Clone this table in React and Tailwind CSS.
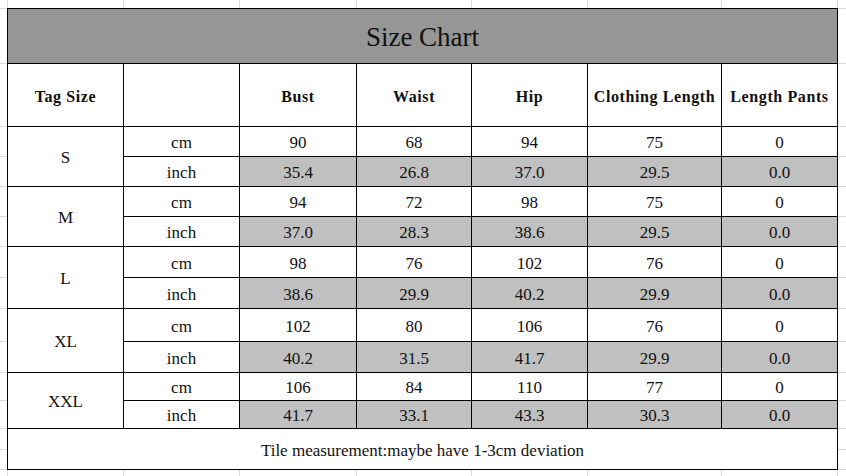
import React from "react";

// faint spreadsheet gridlines around the table
const stripRows = [
  "h-[54px]", "h-[62px]", "h-[29px]", "h-[29px]", "h-[29px]", "h-[29px]", "h-[30px]",
  "h-[30px]", "h-[32px]", "h-[30px]", "h-[27px]", "h-[27px]", "h-[20px]", "h-[19px]",
];
const stripCols = [
  "w-[115px]", "w-[115px]", "w-[116px]", "w-[114px]", "w-[115px]", "w-[133px]", "w-[115px]",
];

const sizes = [
  { tag: "S", cm: ["90", "68", "94", "75", "0"], inch: ["35.4", "26.8", "37.0", "29.5", "0.0"] },
  { tag: "M", cm: ["94", "72", "98", "75", "0"], inch: ["37.0", "28.3", "38.6", "29.5", "0.0"] },
  { tag: "L", cm: ["98", "76", "102", "76", "0"], inch: ["38.6", "29.9", "40.2", "29.9", "0.0"] },
  { tag: "XL", cm: ["102", "80", "106", "76", "0"], inch: ["40.2", "31.5", "41.7", "29.9", "0.0"] },
  { tag: "XXL", cm: ["106", "84", "110", "77", "0"], inch: ["41.7", "33.1", "43.3", "30.3", "0.0"] },
];

const headers = ["Tag Size", "", "Bust", "Waist", "Hip", "Clothing Length", "Length Pants"];

function Cell({ children, className = "" }) {
  return (
    <div className={"flex items-center justify-center text-center pt-[3px] " + className}>
      {children}
    </div>
  );
}

function SideStrip() {
  return (
    <div className="flex flex-col">
      {stripRows.map((h, i) => (
        <div key={i} className={"border-t border-[#d9d9d9] box-content " + h} />
      ))}
      <div className="border-t border-[#d9d9d9]" />
    </div>
  );
}

function EdgeStrip() {
  return (
    <div className="flex h-full">
      {stripCols.map((w, i) => (
        <div key={i} className={"border-l border-[#d9d9d9] box-content h-full " + w} />
      ))}
      <div className="border-l border-[#d9d9d9] h-full" />
    </div>
  );
}

export default function App() {
  return (
    <div className="w-[846px] h-[476px] bg-white overflow-hidden grid grid-cols-[7px_831px_8px] grid-rows-[8px_462px_6px] text-[#111] font-['Liberation_Serif','Times_New_Roman',serif]">
      <div />
      <EdgeStrip />
      <div />

      <SideStrip />
      <div className="grid gap-px bg-black p-px grid-cols-[115px_115px_116px_114px_115px_133px_115px] grid-rows-[54px_62px_29px_29px_29px_29px_30px_30px_32px_30px_27px_27px_40px]">
        <Cell className="col-span-7 bg-[#969696] text-[27px]">Size Chart</Cell>

        {headers.map((h, i) => (
          <Cell key={i} className="bg-white text-[16px] font-bold tracking-[0.6px]">
            {h}
          </Cell>
        ))}

        {sizes.map((s) => (
          <React.Fragment key={s.tag}>
            <Cell className="row-span-2 bg-white text-[17px]">{s.tag}</Cell>
            <Cell className="bg-white text-[17px]">cm</Cell>
            {s.cm.map((v, i) => (
              <Cell key={"c" + i} className="bg-white text-[17px]">
                {v}
              </Cell>
            ))}
            <Cell className="bg-white text-[17px]">inch</Cell>
            {s.inch.map((v, i) => (
              <Cell key={"i" + i} className="bg-[#c0c0c0] text-[17px]">
                {v}
              </Cell>
            ))}
          </React.Fragment>
        ))}

        <Cell className="col-span-7 bg-white text-[17px]">
          Tile measurement:maybe have 1-3cm deviation
        </Cell>
      </div>
      <SideStrip />

      <div />
      <EdgeStrip />
      <div />
    </div>
  );
}
